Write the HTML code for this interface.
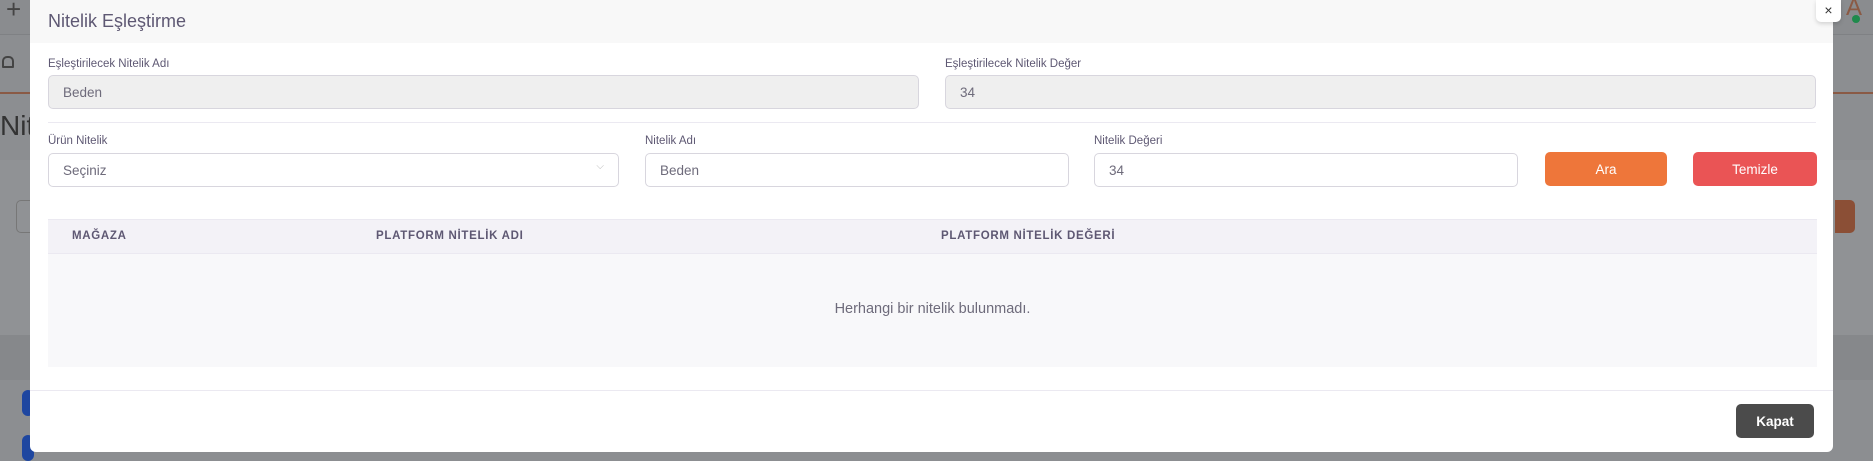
<!DOCTYPE html>
<html><head><meta charset="utf-8"><style>
*{box-sizing:border-box;margin:0;padding:0}
body{width:1873px;height:456px;overflow:hidden;background:#8c8e91;font-family:"Liberation Sans",sans-serif;position:relative}
.a{position:absolute}
.lbl{position:absolute;font-size:11.5px;color:#5e5873}
.inp{position:absolute;border:1px solid #d8d6de;border-radius:5px;font-size:13.5px;color:#6e6b7b;padding-left:14px;display:flex;align-items:center;background:#fff}
.th{position:absolute;top:230px;font-size:11.5px;color:#5e5873;letter-spacing:.7px;font-weight:bold}
</style></head><body>
<div class="a" style="left:0;top:0;width:1873px;height:34px;background:#8a8c8f"></div>
<div class="a" style="left:6px;top:-6px;font-size:26px;color:#444">+</div>
<div class="a" style="left:0;top:34px;width:1873px;height:1px;background:#7f8184"></div>
<div class="a" style="left:2px;top:56px;width:12px;height:12px;border:2px solid #444;border-radius:5px 5px 1px 1px"></div>
<div class="a" style="left:0;top:92px;width:1873px;height:2px;background:#8a5a45"></div>
<div class="a" style="left:0;top:110px;font-size:28px;color:#333">Nit</div>
<div class="a" style="left:0;top:160px;width:1873px;height:175px;background:#909295"></div>
<div class="a" style="left:16px;top:200px;width:20px;height:33px;border:1px solid #777;border-radius:5px"></div>
<div class="a" style="left:1835px;top:200px;width:20px;height:33px;background:#8b4f36;border-radius:0 5px 5px 0"></div>
<div class="a" style="left:0;top:335px;width:1873px;height:45px;background:#86888b"></div>
<div class="a" style="left:22px;top:390px;width:12px;height:26px;background:#1e46a0;border-radius:6px"></div>
<div class="a" style="left:22px;top:435px;width:12px;height:26px;background:#1e46a0;border-radius:6px"></div>
<div class="a" style="left:1846px;top:-6px;font-size:24px;color:#8a5a45">A</div>
<div class="a" style="left:1852px;top:15px;width:8px;height:8px;border-radius:50%;background:#1f8a4c"></div>
<div class="a" style="left:30px;top:0;width:1803px;height:452px;background:#fff;border-radius:0 0 6px 6px;overflow:hidden">
  <div class="a" style="left:0;top:0;width:100%;height:43px;background:#f8f8f8"></div>
  <div class="a" style="left:18px;top:11px;font-size:18px;color:#5e5873">Nitelik Eşleştirme</div>
  <div class="lbl" style="left:18px;top:58px">Eşleştirilecek Nitelik Adı</div>
  <div class="inp" style="left:18px;top:75px;width:871px;height:34px;background:#efefef">Beden</div>
  <div class="lbl" style="left:915px;top:58px">Eşleştirilecek Nitelik Değer</div>
  <div class="inp" style="left:915px;top:75px;width:871px;height:34px;background:#efefef">34</div>
  <div class="a" style="left:18px;top:122px;width:1768px;height:1px;background:#ebe9f1"></div>
  <div class="lbl" style="left:18px;top:135px">Ürün Nitelik</div>
  <div class="inp" style="left:18px;top:153px;width:571px;height:34px">Seçiniz<span style="position:absolute;right:14px;top:7px;font-size:10px;color:#bbb">⌵</span></div>
  <div class="lbl" style="left:615px;top:135px">Nitelik Adı</div>
  <div class="inp" style="left:615px;top:153px;width:424px;height:34px">Beden</div>
  <div class="lbl" style="left:1064px;top:135px">Nitelik Değeri</div>
  <div class="inp" style="left:1064px;top:153px;width:424px;height:34px">34</div>
  <div class="a" style="left:1515px;top:152px;width:122px;height:34px;background:#ee763a;border-radius:5px;color:#fff;font-size:13.5px;display:flex;align-items:center;justify-content:center">Ara</div>
  <div class="a" style="left:1663px;top:152px;width:124px;height:34px;background:#ea5455;border-radius:5px;color:#fff;font-size:13.5px;display:flex;align-items:center;justify-content:center">Temizle</div>
  <div class="a" style="left:18px;top:219px;width:1769px;height:35px;background:#f3f2f7;border-top:1px solid #ebe9f1;border-bottom:1px solid #ebe9f1"></div>
  <div class="th" style="left:42px">MAĞAZA</div>
  <div class="th" style="left:346px">PLATFORM NİTELİK ADI</div>
  <div class="th" style="left:911px">PLATFORM NİTELİK DEĞERİ</div>
  <div class="a" style="left:18px;top:254px;width:1769px;height:113px;background:#f8f8fa"></div>
  <div class="a" style="left:18px;top:301px;width:1769px;text-align:center;font-size:14.5px;color:#6e6b7b">Herhangi bir nitelik bulunmadı.</div>
  <div class="a" style="left:0;top:390px;width:100%;height:1px;background:#ebe9f1"></div>
  <div class="a" style="left:1706px;top:404px;width:78px;height:34px;background:#4b4b4b;border-radius:5px;color:#fff;font-size:13.5px;font-weight:bold;display:flex;align-items:center;justify-content:center">Kapat</div>
</div>
<div class="a" style="left:1816px;top:0;width:25px;height:22px;background:#fff;border-radius:0 0 5px 5px;box-shadow:0 2px 4px rgba(0,0,0,.15);font-size:14px;color:#333;text-align:center;line-height:20px">×</div>
</body></html>
